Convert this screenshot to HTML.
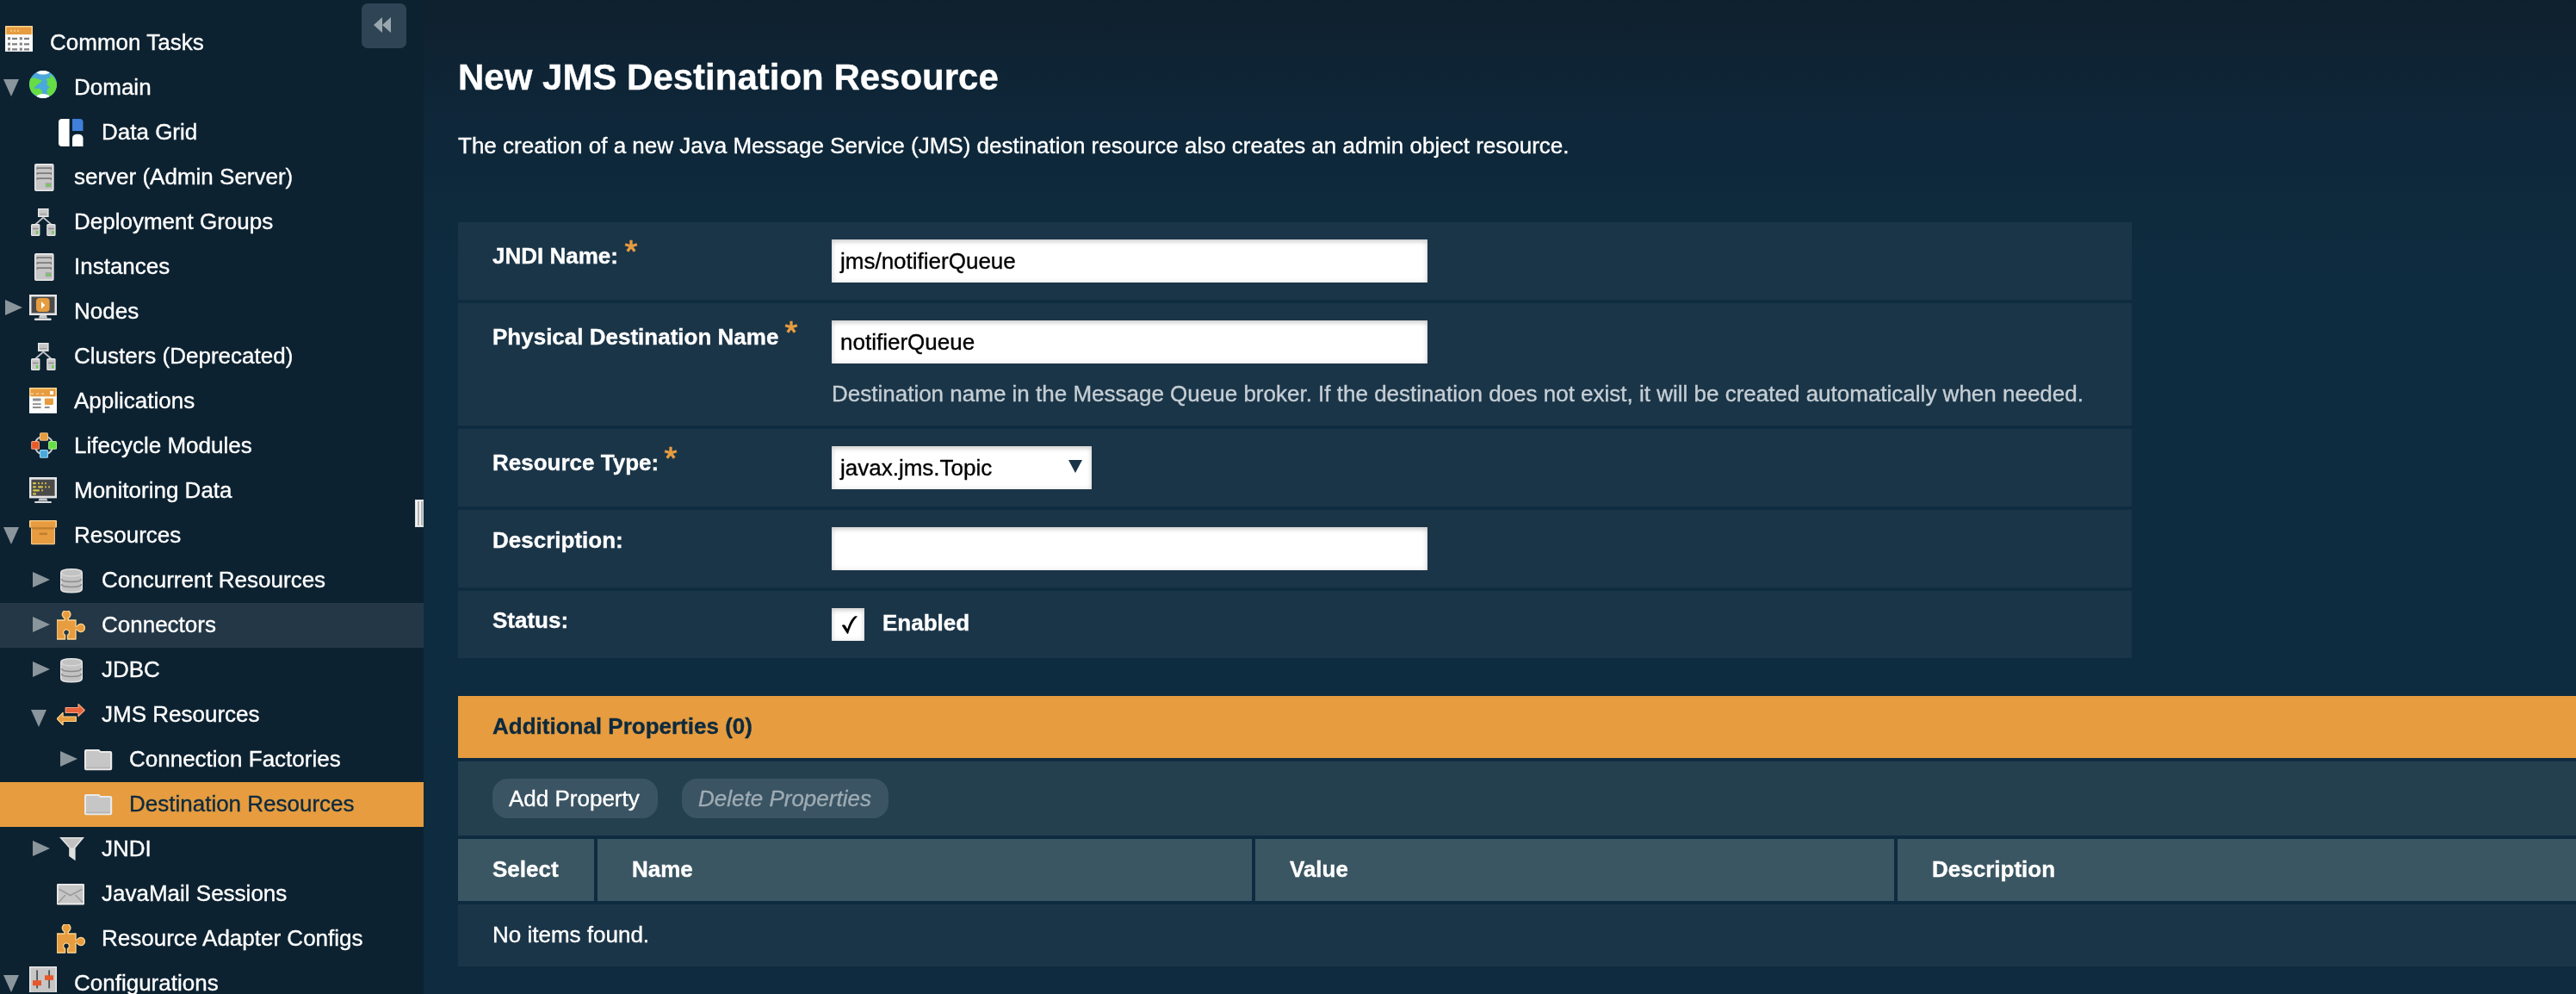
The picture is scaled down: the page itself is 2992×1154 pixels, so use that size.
<!DOCTYPE html>
<html><head><meta charset="utf-8"><style>
*{box-sizing:border-box}
html,body{margin:0;padding:0} .t,.st,.lbl,.inpt{will-change:transform;-webkit-text-stroke:0.35px currentColor}
body{width:2992px;height:1154px;overflow:hidden;position:relative;background:#0e2a3d;font-family:"Liberation Sans",sans-serif;}
#side{position:absolute;left:0;top:0;width:492px;height:1154px;background:#0d2231;overflow:hidden}
.ic{position:absolute;line-height:0}
.ic svg{display:block}
.st{position:absolute;font-size:26px;line-height:26px;white-space:nowrap}
#main{position:absolute;left:492px;top:0;width:2500px;height:1154px;background:linear-gradient(180deg,#0f202d 0px,#0e2638 120px,#0e2c40 320px,#0e2c40 800px,#0e2b3f 1154px)}
.t{position:absolute;white-space:nowrap;font-size:26px;line-height:26px;color:#fff}
.row{position:absolute;left:532px;width:1944px;background:#1b3548}
.lbl{position:absolute;left:572px;font-weight:bold;font-size:26px;line-height:26px;color:#fff;white-space:nowrap}
.ast{position:absolute;color:#e69c3f;font-weight:bold;font-size:26px;line-height:26px}
.inp{position:absolute;left:966px;width:692px;height:50px;background:#fff;box-shadow:inset 0 3px 5px rgba(0,0,0,0.14), inset 0 0 7px rgba(0,0,0,0.10)}
.inpt{position:absolute;font-size:26px;line-height:26px;color:#000;white-space:nowrap}
</style></head><body>
<div id="side">
<div style="position:absolute;left:420px;top:4px;width:52px;height:52px;border-radius:7px;background:#2f4454"></div>
<svg class="ic" style="left:434px;top:20px" width="22" height="20" viewBox="0 0 22 20"><path d="M0 9L10 0V18Z M10 9L20 0V18Z" fill="#9aa6ad"/></svg>
<svg class="ic" style="left:6px;top:30px" width="32" height="30" viewBox="0 0 32 30"><rect x="0" y="0" width="32" height="30" rx="1.5" fill="#fbfbfb"/><rect x="0" y="0" width="32" height="10" rx="1" fill="#ffd590"/><rect x="1.5" y="1.5" width="29" height="8.5" fill="#e69c3f"/><g fill="#f3c27e"><rect x="6" y="4.5" width="2" height="2.5"/><rect x="10" y="4.5" width="2" height="2.5"/><rect x="14" y="4.5" width="2" height="2.5"/></g><g fill="#7e7e7e"><rect x="3" y="13.2" width="3" height="3"/><rect x="8" y="13.799999999999999" width="6" height="2.2"/><rect x="16.8" y="13.2" width="3" height="3"/><rect x="22" y="13.799999999999999" width="6" height="2.2"/></g><g fill="#7e7e7e"><rect x="3" y="19.6" width="3" height="3"/><rect x="8" y="20.200000000000003" width="6" height="2.2"/><rect x="16.8" y="19.6" width="3" height="3"/><rect x="22" y="20.200000000000003" width="6" height="2.2"/></g><g fill="#7e7e7e"><rect x="3" y="25.6" width="3" height="3"/><rect x="8" y="26.200000000000003" width="6" height="2.2"/><rect x="16.8" y="25.6" width="3" height="3"/><rect x="22" y="26.200000000000003" width="6" height="2.2"/></g><rect x="0" y="29" width="32" height="1" fill="#d8dde0"/></svg>
<div class="st" style="left:57.5px;top:36px;color:#ffffff">Common Tasks</div>
<svg class="ic" style="left:4px;top:92px" width="18" height="20" viewBox="0 0 18 20"><path d="M0 0H18L9 20Z" fill="#8a959c"/></svg><svg class="ic" style="left:34px;top:82px" width="32" height="32" viewBox="0 0 32 32"><defs><clipPath id="gc"><circle cx="16" cy="16" r="16"/></clipPath></defs><g clip-path="url(#gc)"><rect width="32" height="32" fill="#4aa8dc"/><path d="M0 9L7 8.5L11 10L15 11.5L12.5 14L8.5 17L5 20.5L8 21L11.5 20.5L14.5 23L15.5 27.5L10 30L2 25L0 18Z" fill="#66dd44"/><path d="M24 4L28.5 8L32 14L32 24L27 28.5L22 30L20.5 25L21 21.5L24 19.5L20.5 16.5L21 12.5L24 10L24.5 7Z" fill="#66dd44"/><path d="M20 9.5Q22 8 24.5 9.5Q23.5 12 21 12Q19.5 11 20 9.5Z" fill="#66dd44"/><ellipse cx="16" cy="1" rx="8" ry="3.6" fill="#ffffff"/><ellipse cx="16" cy="31" rx="8" ry="4" fill="#ffffff"/></g></svg>
<div class="st" style="left:85.5px;top:88px;color:#ffffff">Domain</div>
<svg class="ic" style="left:68px;top:138px" width="29" height="32" viewBox="0 0 29 32"><path d="M4 0H12.6V32H4Q0 32 0 28V4Q0 0 4 0Z" fill="#fff"/><path d="M16 0H24.5Q28.5 0 28.5 4V14H16Z" fill="#3f7fdb"/><path d="M16 22.5Q16 17.8 22.2 17.8Q28.5 17.8 28.5 22.5V32H16Z" fill="#fff"/></svg>
<div class="st" style="left:117.5px;top:140px;color:#ffffff">Data Grid</div>
<svg class="ic" style="left:40px;top:190px" width="23" height="32" viewBox="0 0 23 32"><rect x="0" y="0" width="22.6" height="32" rx="2" fill="#e9e9e9"/><rect x="1.5" y="1.8" width="19.6" height="28.7" rx="1" fill="#c6c6c6"/><path d="M2.5 4.2H20V6.9H18.8V5.9H3.7V6.9H2.5Z" fill="#7c7c7c"/><path d="M2.5 10.3H20V13.0H18.8V12.0H3.7V13.0H2.5Z" fill="#7c7c7c"/><path d="M2.5 16.3H20V19.0H18.8V18.0H3.7V19.0H2.5Z" fill="#7c7c7c"/><rect x="12.7" y="22" width="7.2" height="5.5" fill="#a8a8a8"/><rect x="13.9" y="23.9" width="4.7" height="2.3" fill="#66d04c"/></svg>
<div class="st" style="left:85.5px;top:192px;color:#ffffff">server (Admin Server)</div>
<svg class="ic" style="left:36px;top:242px" width="29" height="32" viewBox="0 0 29 32"><rect x="8" y="0" width="12.6" height="10" fill="#e9e9e9"/><rect x="9.3" y="1.3" width="10" height="7.5" fill="#c6c6c6"/><rect x="10.5" y="6" width="7.5" height="1.2" fill="#9a9a9a"/><path d="M14.3 10.5L5.2 18.5M14.3 10.5L23.4 18.5" stroke="#bfc3c6" stroke-width="1.8"/><rect x="0" y="18" width="10.4" height="14" rx="1.5" fill="#e9e9e9"/><rect x="1.2" y="19.5" width="8" height="11.3" fill="#c6c6c6"/><rect x="2" y="22.8" width="6.5" height="1.4" fill="#8a8a8a"/><rect x="6" y="26" width="2.4" height="3.6" fill="#66d04c"/><rect x="18.2" y="18" width="10.4" height="14" rx="1.5" fill="#e9e9e9"/><rect x="19.4" y="19.5" width="8" height="11.3" fill="#c6c6c6"/><rect x="20.2" y="22.8" width="6.5" height="1.4" fill="#8a8a8a"/><rect x="24.2" y="26" width="2.4" height="3.6" fill="#66d04c"/></svg>
<div class="st" style="left:85.5px;top:244px;color:#ffffff">Deployment Groups</div>
<svg class="ic" style="left:40px;top:294px" width="23" height="32" viewBox="0 0 23 32"><rect x="0" y="0" width="22.6" height="32" rx="2" fill="#e9e9e9"/><rect x="1.5" y="1.8" width="19.6" height="28.7" rx="1" fill="#c6c6c6"/><path d="M2.5 4.2H20V6.9H18.8V5.9H3.7V6.9H2.5Z" fill="#7c7c7c"/><path d="M2.5 10.3H20V13.0H18.8V12.0H3.7V13.0H2.5Z" fill="#7c7c7c"/><path d="M2.5 16.3H20V19.0H18.8V18.0H3.7V19.0H2.5Z" fill="#7c7c7c"/><rect x="12.7" y="22" width="7.2" height="5.5" fill="#a8a8a8"/><rect x="13.9" y="23.9" width="4.7" height="2.3" fill="#66d04c"/></svg>
<div class="st" style="left:85.5px;top:296px;color:#ffffff">Instances</div>
<svg class="ic" style="left:6px;top:348px" width="20" height="18" viewBox="0 0 20 18"><path d="M0 0L20 9L0 18Z" fill="#8a959c"/></svg><svg class="ic" style="left:34px;top:342px" width="32" height="31" viewBox="0 0 32 31"><rect x="0" y="0" width="32" height="24" fill="#e6e6e6"/><rect x="2.5" y="2.5" width="27" height="19" fill="#4a4a4a"/><rect x="8" y="4" width="15.6" height="16" rx="4" fill="#e69c3f"/><path d="M14 8L18.3 12.2L14 16.6Z" fill="#fff"/><path d="M12 24H20L21 27.5H11Z" fill="#c8c8c8"/><rect x="5.8" y="27.5" width="20" height="2.6" rx="1.3" fill="#dcdcdc"/></svg>
<div class="st" style="left:85.5px;top:348px;color:#ffffff">Nodes</div>
<svg class="ic" style="left:36px;top:398px" width="29" height="32" viewBox="0 0 29 32"><rect x="8" y="0" width="12.6" height="10" fill="#e9e9e9"/><rect x="9.3" y="1.3" width="10" height="7.5" fill="#c6c6c6"/><rect x="10.5" y="6" width="7.5" height="1.2" fill="#9a9a9a"/><path d="M14.3 10.5L5.2 18.5M14.3 10.5L23.4 18.5" stroke="#bfc3c6" stroke-width="1.8"/><rect x="0" y="18" width="10.4" height="14" rx="1.5" fill="#e9e9e9"/><rect x="1.2" y="19.5" width="8" height="11.3" fill="#c6c6c6"/><rect x="2" y="22.8" width="6.5" height="1.4" fill="#8a8a8a"/><rect x="6" y="26" width="2.4" height="3.6" fill="#66d04c"/><rect x="18.2" y="18" width="10.4" height="14" rx="1.5" fill="#e9e9e9"/><rect x="19.4" y="19.5" width="8" height="11.3" fill="#c6c6c6"/><rect x="20.2" y="22.8" width="6.5" height="1.4" fill="#8a8a8a"/><rect x="24.2" y="26" width="2.4" height="3.6" fill="#66d04c"/></svg>
<div class="st" style="left:85.5px;top:400px;color:#ffffff">Clusters (Deprecated)</div>
<svg class="ic" style="left:34px;top:450px" width="32" height="30" viewBox="0 0 32 30"><rect x="0" y="0" width="32" height="30" rx="1" fill="#fbfbfb"/><rect x="0" y="0" width="32" height="10.2" rx="1" fill="#ffd590"/><rect x="1.5" y="1.5" width="29" height="8.7" rx="1" fill="#e69c3f"/><g fill="#f6d4a3"><rect x="2" y="6.5" width="3" height="1.4"/><rect x="8" y="6.5" width="3" height="1.4"/><rect x="14" y="6.5" width="3" height="1.4"/></g><rect x="24" y="4" width="4" height="4" fill="#fff"/><g fill="#8f8f8f"><rect x="4" y="12.4" width="9.6" height="3.1" rx="1"/><rect x="4" y="18.2" width="9.6" height="1.8"/><rect x="4" y="22" width="9.6" height="2"/><rect x="17.9" y="22" width="5.7" height="2"/></g><rect x="17.9" y="12.4" width="10" height="7.5" rx="0.8" fill="#e69c3f"/><rect x="0" y="29" width="32" height="1" fill="#d8dde0"/></svg>
<div class="st" style="left:85.5px;top:452px;color:#ffffff">Applications</div>
<svg class="ic" style="left:36px;top:502px" width="30" height="30" viewBox="0 0 30 30"><circle cx="15" cy="15" r="10.5" fill="none" stroke="#c4c8cb" stroke-width="2"/><rect x="10" y="0.2" width="10" height="9.5" rx="1.5" fill="#f2c68a"/><rect x="11" y="1.2" width="8" height="7.5" fill="#e69c3f"/><rect x="0.2" y="10.1" width="9.7" height="9.6" rx="1.5" fill="#f5a582"/><rect x="1.2" y="11.1" width="7.7" height="7.6" fill="#e85a2a"/><rect x="20.1" y="10" width="9.9" height="9.7" rx="1.5" fill="#a8f090"/><rect x="21.1" y="11" width="7.9" height="7.7" fill="#66dd44"/><rect x="10" y="20.1" width="10" height="9.7" rx="1.5" fill="#a0d8f5"/><rect x="11" y="21.1" width="8" height="7.7" fill="#4aa8dc"/></svg>
<div class="st" style="left:85.5px;top:504px;color:#ffffff">Lifecycle Modules</div>
<svg class="ic" style="left:34px;top:554px" width="32" height="31" viewBox="0 0 32 31"><rect x="0" y="0" width="32" height="24.4" fill="#e6e6e6"/><rect x="2.4" y="2.7" width="27.2" height="19" fill="#4a4a4a"/><g fill="#d4c44a"><rect x="4" y="6" width="4" height="2.2" rx="1"/><rect x="10" y="6" width="2" height="2.2" rx="1"/><rect x="14" y="6" width="2" height="2.2" rx="1"/><rect x="18" y="6" width="2" height="2.2" rx="1"/><rect x="4" y="10.3" width="4" height="2.2" rx="1"/><rect x="10" y="10.3" width="6" height="2.2" rx="1"/><rect x="18" y="10.3" width="2" height="2.2" rx="1"/><rect x="22" y="10.3" width="2" height="2.2" rx="1"/><rect x="4" y="14.3" width="8" height="2.2" rx="1"/><rect x="14" y="14.3" width="2" height="2.2" rx="1"/><rect x="4" y="18.3" width="4" height="2.2" rx="1"/></g><path d="M11.7 24.4H20.1L21.5 27.5H10.3Z" fill="#c8c8c8"/><rect x="6" y="27.9" width="20" height="2.2" rx="1.1" fill="#dcdcdc"/></svg>
<div class="st" style="left:85.5px;top:556px;color:#ffffff">Monitoring Data</div>
<svg class="ic" style="left:4px;top:612px" width="18" height="20" viewBox="0 0 18 20"><path d="M0 0H18L9 20Z" fill="#8a959c"/></svg><svg class="ic" style="left:34px;top:604px" width="32" height="29" viewBox="0 0 32 29"><rect x="0" y="0" width="32" height="8.4" rx="1" fill="#ffd590"/><rect x="1.5" y="1.2" width="29" height="7.2" fill="#e69c3f"/><rect x="2" y="8.2" width="28" height="20" rx="1.5" fill="#f2c68a"/><rect x="3.2" y="8.2" width="25.6" height="18.8" fill="#e69c3f"/><rect x="3.2" y="8.2" width="25.6" height="2.3" fill="#c07f2e"/><rect x="11.5" y="14.5" width="9.5" height="2.5" rx="1" fill="#c07f2e"/></svg>
<div class="st" style="left:85.5px;top:608px;color:#ffffff">Resources</div>
<svg class="ic" style="left:38px;top:664px" width="20" height="18" viewBox="0 0 20 18"><path d="M0 0L20 9L0 18Z" fill="#8a959c"/></svg><svg class="ic" style="left:70px;top:660px" width="26" height="29" viewBox="0 0 26 29"><path d="M0 4.5Q0 0 13 0Q26 0 26 4.5V24Q26 28.5 13 28.5Q0 28.5 0 24Z" fill="#e2e2e2"/><path d="M1.5 5Q1.5 1.5 13 1.5Q24.5 1.5 24.5 5V23.5Q24.5 27 13 27Q1.5 27 1.5 23.5Z" fill="#c2c2c2"/><path d="M1.5 5Q1.5 9 13 9Q24.5 9 24.5 5" fill="none" stroke="#d8d8d8" stroke-width="1.5"/><path d="M1.5 12Q1.5 15.5 13 15.5Q24.5 15.5 24.5 12" fill="none" stroke="#8c8c8c" stroke-width="1.6"/><path d="M1.5 18Q1.5 21.5 13 21.5Q24.5 21.5 24.5 18" fill="none" stroke="#8c8c8c" stroke-width="1.6"/></svg>
<div class="st" style="left:117.5px;top:660px;color:#ffffff">Concurrent Resources</div>
<div style="position:absolute;left:0;top:700px;width:492px;height:52px;background:#233746"></div>
<svg class="ic" style="left:38px;top:716px" width="20" height="18" viewBox="0 0 20 18"><path d="M0 0L20 9L0 18Z" fill="#8a959c"/></svg><svg class="ic" style="left:66px;top:709px" width="33" height="34" viewBox="0 0 33 34"><path d="M0 11H9V8.6A4.8 4.8 0 1 1 13.2 8.6V11H22V18.2H23.6A4.6 4.6 0 1 1 23.6 21.8H22V33H12.5V28.4A3.4 3.4 0 1 0 9.6 28.4V33H0Z" fill="#e69c3f" stroke="#ffd590" stroke-width="1.3" stroke-linejoin="round"/></svg>
<div class="st" style="left:117.5px;top:712px;color:#ffffff">Connectors</div>
<svg class="ic" style="left:38px;top:768px" width="20" height="18" viewBox="0 0 20 18"><path d="M0 0L20 9L0 18Z" fill="#8a959c"/></svg><svg class="ic" style="left:70px;top:764px" width="26" height="29" viewBox="0 0 26 29"><path d="M0 4.5Q0 0 13 0Q26 0 26 4.5V24Q26 28.5 13 28.5Q0 28.5 0 24Z" fill="#e2e2e2"/><path d="M1.5 5Q1.5 1.5 13 1.5Q24.5 1.5 24.5 5V23.5Q24.5 27 13 27Q1.5 27 1.5 23.5Z" fill="#c2c2c2"/><path d="M1.5 5Q1.5 9 13 9Q24.5 9 24.5 5" fill="none" stroke="#d8d8d8" stroke-width="1.5"/><path d="M1.5 12Q1.5 15.5 13 15.5Q24.5 15.5 24.5 12" fill="none" stroke="#8c8c8c" stroke-width="1.6"/><path d="M1.5 18Q1.5 21.5 13 21.5Q24.5 21.5 24.5 18" fill="none" stroke="#8c8c8c" stroke-width="1.6"/></svg>
<div class="st" style="left:117.5px;top:764px;color:#ffffff">JDBC</div>
<svg class="ic" style="left:36px;top:824px" width="18" height="20" viewBox="0 0 18 20"><path d="M0 0H18L9 20Z" fill="#8a959c"/></svg><svg class="ic" style="left:66px;top:817px" width="33" height="25" viewBox="0 0 33 25"><path d="M10.2 4.5H25V0.5L32.3 7.5L25 14.5V10.5H10.2Z" fill="#e8643c" stroke="#f5a582" stroke-width="1.2" stroke-linejoin="round"/><path d="M22.3 15H7.1V10.3L0 17.5L7.1 24.7V20.5H22.3Z" fill="#e69c3f" stroke="#ffd590" stroke-width="1.2" stroke-linejoin="round"/></svg>
<div class="st" style="left:117.5px;top:816px;color:#ffffff">JMS Resources</div>
<svg class="ic" style="left:70px;top:872px" width="20" height="18" viewBox="0 0 20 18"><path d="M0 0L20 9L0 18Z" fill="#8a959c"/></svg><svg class="ic" style="left:98px;top:870px" width="33" height="25" viewBox="0 0 33 25"><path d="M2 0H17L19 2H30.2Q32.2 2 32.2 4V22.3Q32.2 24.3 30.2 24.3H2Q0 24.3 0 22.3V2Q0 0 2 0Z" fill="#e9e9e9"/><path d="M3 2H16.3L18.3 4H29.2Q30 4 30 5V21.3Q30 22.3 29 22.3H3Q2 22.3 2 21.3V3Q2 2 3 2Z" fill="#c6c6c6"/><rect x="2" y="20.5" width="28" height="1.8" fill="#b5b5b5"/></svg>
<div class="st" style="left:149.5px;top:868px;color:#ffffff">Connection Factories</div>
<div style="position:absolute;left:0;top:908px;width:492px;height:52px;background:#e69c3f"></div>
<svg class="ic" style="left:98px;top:922px" width="33" height="25" viewBox="0 0 33 25"><path d="M2 0H17L19 2H30.2Q32.2 2 32.2 4V22.3Q32.2 24.3 30.2 24.3H2Q0 24.3 0 22.3V2Q0 0 2 0Z" fill="#e9e9e9"/><path d="M3 2H16.3L18.3 4H29.2Q30 4 30 5V21.3Q30 22.3 29 22.3H3Q2 22.3 2 21.3V3Q2 2 3 2Z" fill="#c6c6c6"/><rect x="2" y="20.5" width="28" height="1.8" fill="#b5b5b5"/></svg>
<div class="st" style="left:149.5px;top:920px;color:#0d2a3e">Destination Resources</div>
<svg class="ic" style="left:38px;top:976px" width="20" height="18" viewBox="0 0 20 18"><path d="M0 0L20 9L0 18Z" fill="#8a959c"/></svg><svg class="ic" style="left:69px;top:972px" width="29" height="28" viewBox="0 0 29 28"><path d="M0 0H29L18.6 12.6V27.2L11.2 22V12.6Z" fill="#e0e0e0"/><path d="M3.5 1.5H25.5L17 11.5V12.6H12.4V11.5Z" fill="#c2c2c2"/></svg>
<div class="st" style="left:117.5px;top:972px;color:#ffffff">JNDI</div>
<svg class="ic" style="left:66px;top:1026px" width="32" height="25" viewBox="0 0 32 25"><rect x="0" y="0" width="32" height="24.4" rx="1.2" fill="#e9e9e9"/><rect x="1.8" y="1.8" width="28.4" height="20.6" fill="#c6c6c6"/><path d="M2.5 6.3L15.7 13.5L29.5 6.3M10 13L1.7 22M21.5 13L30.2 21.7" fill="none" stroke="#9c9c9c" stroke-width="1.6"/></svg>
<div class="st" style="left:117.5px;top:1024px;color:#ffffff">JavaMail Sessions</div>
<svg class="ic" style="left:66px;top:1073px" width="33" height="34" viewBox="0 0 33 34"><path d="M0 11H9V8.6A4.8 4.8 0 1 1 13.2 8.6V11H22V18.2H23.6A4.6 4.6 0 1 1 23.6 21.8H22V33H12.5V28.4A3.4 3.4 0 1 0 9.6 28.4V33H0Z" fill="#e69c3f" stroke="#ffd590" stroke-width="1.3" stroke-linejoin="round"/></svg>
<div class="st" style="left:117.5px;top:1076px;color:#ffffff">Resource Adapter Configs</div>
<svg class="ic" style="left:4px;top:1132px" width="18" height="20" viewBox="0 0 18 20"><path d="M0 0H18L9 20Z" fill="#8a959c"/></svg><svg class="ic" style="left:34px;top:1122px" width="32" height="30" viewBox="0 0 32 30"><rect x="0" y="0" width="32" height="30" fill="#e9e9e9"/><rect x="1.5" y="1.5" width="29" height="28.5" fill="#c6c6c6"/><rect x="8.3" y="4.4" width="1.6" height="21" fill="#444"/><rect x="22.3" y="4.4" width="1.6" height="21" fill="#444"/><rect x="4" y="16.2" width="10" height="6" fill="#e8572a"/><rect x="18" y="10.3" width="10" height="5.6" fill="#e8572a"/></svg>
<div class="st" style="left:85.5px;top:1128px;color:#ffffff">Configurations</div>
<div style="position:absolute;left:482px;top:580px;width:10px;height:32px;background:#f2f2f2;border:1px solid #ddd"></div>
<div style="position:absolute;left:485px;top:582px;width:2px;height:28px;background:#b5b5b5"></div>
<div style="position:absolute;left:489px;top:582px;width:2px;height:28px;background:#b5b5b5"></div>
</div>
<div id="main"></div>
<div class="t" style="left:532px;top:69px;font-size:42px;line-height:42px;font-weight:bold">New JMS Destination Resource</div>
<div class="t" style="left:532px;top:156px">The creation of a new Java Message Service (JMS) destination resource also creates an admin object resource.</div>

<div class="row" style="top:258px;height:90px"></div>
<div class="row" style="top:352px;height:142px"></div>
<div class="row" style="top:498px;height:90px"></div>
<div class="row" style="top:592px;height:90px"></div>
<div class="row" style="top:686px;height:78px"></div>

<div class="lbl" style="top:284px">JNDI Name:</div>
<svg class="ic" style="left:725px;top:277.5px" width="16" height="16" viewBox="0 0 16 16"><path d="M8 8L8.00 0.80M8 8L14.85 5.78M8 8L12.23 13.82M8 8L3.77 13.82M8 8L1.15 5.78" stroke="#e69c3f" stroke-width="3.3" stroke-linecap="butt"/></svg>
<div class="inp" style="top:278px"></div>
<div class="inpt" style="left:976px;top:290px">jms/notifierQueue</div>

<div class="lbl" style="top:378px">Physical Destination Name</div>
<svg class="ic" style="left:910.5px;top:371.5px" width="16" height="16" viewBox="0 0 16 16"><path d="M8 8L8.00 0.80M8 8L14.85 5.78M8 8L12.23 13.82M8 8L3.77 13.82M8 8L1.15 5.78" stroke="#e69c3f" stroke-width="3.3" stroke-linecap="butt"/></svg>
<div class="inp" style="top:372px"></div>
<div class="inpt" style="left:976px;top:384px">notifierQueue</div>
<div class="t" style="left:966px;top:444px;color:#c5ced4">Destination name in the Message Queue broker. If the destination does not exist, it will be created automatically when needed.</div>

<div class="lbl" style="top:524px">Resource Type:</div>
<svg class="ic" style="left:770.5px;top:518px" width="16" height="16" viewBox="0 0 16 16"><path d="M8 8L8.00 0.80M8 8L14.85 5.78M8 8L12.23 13.82M8 8L3.77 13.82M8 8L1.15 5.78" stroke="#e69c3f" stroke-width="3.3" stroke-linecap="butt"/></svg>
<div class="inp" style="top:518px;width:302px"></div>
<div class="inpt" style="left:976px;top:530px">javax.jms.Topic</div>
<svg class="ic" style="left:1241px;top:534px" width="16" height="15" viewBox="0 0 16 15"><path d="M0 0H16L8 15Z" fill="#1b3548"/></svg>

<div class="lbl" style="top:614px">Description:</div>
<div class="inp" style="top:612px"></div>

<div class="lbl" style="top:707px">Status:</div>
<div class="inp" style="top:706px;width:38px;height:38px"></div>
<svg class="ic" style="left:960px;top:700px" width="40" height="40" viewBox="0 0 40 40"><path d="M17.8 26.3C18.8 25.2 20.5 25 21.6 26L24.3 30.2C26.5 23.5 29.5 17.5 32.8 15.6C34.2 15 35.4 15.2 36 15.7C31.5 19.5 27.5 27.5 25.2 35.6L24.2 36Z" fill="#000"/></svg>
<div class="lbl" style="left:1025px;top:710px">Enabled</div>

<div style="position:absolute;left:532px;top:808px;width:2460px;height:72px;background:#e69c3f"></div>
<div class="lbl" style="top:830px;color:#0d2a3e">Additional Properties (0)</div>
<div style="position:absolute;left:532px;top:884px;width:2460px;height:86px;background:#243f4e"></div>
<div style="position:absolute;left:572px;top:904px;width:192px;height:46px;border-radius:18px;background:#3a5463"></div>
<div class="t" style="left:591px;top:914px">Add Property</div>
<div style="position:absolute;left:792px;top:904px;width:240px;height:46px;border-radius:18px;background:#3a5463"></div>
<div class="t" style="left:811px;top:914px;font-style:italic;color:#9eabb3">Delete Properties</div>

<div style="position:absolute;left:532px;top:974px;width:158px;height:72px;background:#3b5663"></div>
<div style="position:absolute;left:694px;top:974px;width:760px;height:72px;background:#3b5663"></div>
<div style="position:absolute;left:1458px;top:974px;width:742px;height:72px;background:#3b5663"></div>
<div style="position:absolute;left:2204px;top:974px;width:788px;height:72px;background:#3b5663"></div>
<div class="lbl" style="top:996px">Select</div>
<div class="lbl" style="left:734px;top:996px">Name</div>
<div class="lbl" style="left:1498px;top:996px">Value</div>
<div class="lbl" style="left:2244px;top:996px">Description</div>
<div style="position:absolute;left:532px;top:1050px;width:2460px;height:72px;background:#1b3548"></div>
<div class="t" style="left:572px;top:1072px">No items found.</div>
</body></html>
